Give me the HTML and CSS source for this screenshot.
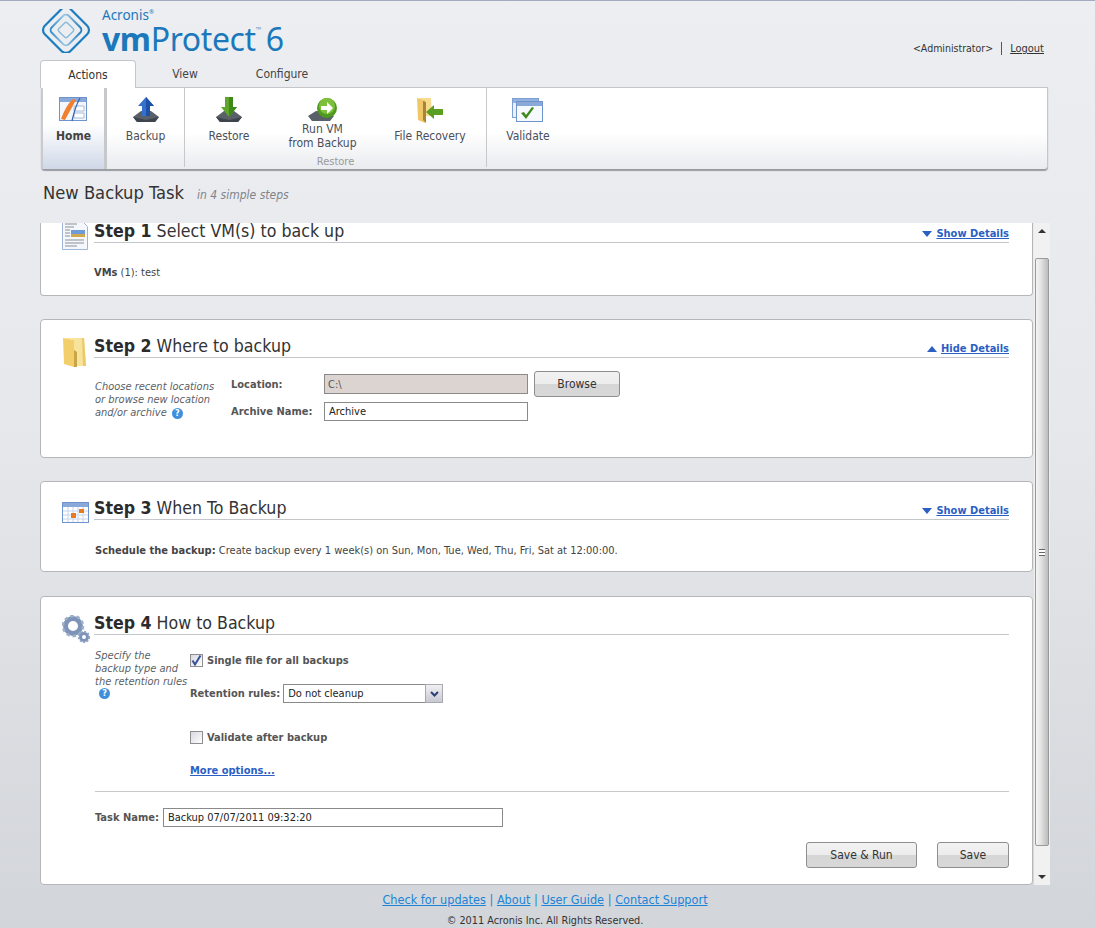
FILE: index.html
```html
<!DOCTYPE html>
<html lang="en">
<head>
<meta charset="utf-8">
<title>Acronis vmProtect 6</title>
<link rel="stylesheet" href="styles.css">
</head>
<body>
<header class="top">
  <div class="brand">
    <svg class="logo-mark" width="50" height="44" viewBox="0 0 50 44">
      <defs><linearGradient id="lg" x1="0" y1="1" x2="1" y2="0"><stop offset="0" stop-color="#2a86c4"/><stop offset=".45" stop-color="#9cc8e6"/><stop offset="1" stop-color="#1a78bc"/></linearGradient></defs>
      <g fill="none" transform="rotate(45 25 21)">
        <rect x="7" y="3" width="36" height="36" rx="6" stroke="#1b7cc0" stroke-width="2.2"/>
        <rect x="13" y="9" width="24" height="24" rx="4" stroke="url(#lg)" stroke-width="2"/>
        <rect x="19" y="15" width="12" height="12" rx="2" stroke="#8bb9d8" stroke-width="1.4"/>
      </g>
    </svg>
    <div class="wordmark">
      <div class="acronis">Acronis<sup>®</sup></div>
      <div class="product"><b>vm</b>Protect<sup>™</sup><span class="six">6</span></div>
    </div>
  </div>
  <div class="user"><span>&lt;Administrator&gt;</span><a href="#">Logout</a></div>
</header>

<nav class="tabs">
  <a class="tab active" href="#">Actions</a>
  <a class="tab view" href="#">View</a>
  <a class="tab config" href="#">Configure</a>
</nav>

<section class="ribbon">
  <div class="rb home">
    <svg width="30" height="26" viewBox="0 0 30 26"><rect x=".5" y=".5" width="27" height="23" fill="#f3f6fb" stroke="#6f93cc"/><rect x="1" y="1" width="26" height="4" fill="#8aa8d8"/><path d="M15 9h10v5H15zM15 16h10v5H15z" fill="#fff" stroke="#a8bcdc"/><path d="M2 22C5 14 9 6 14 2l3 1C14 9 9 17 6 23z" fill="#f08030"/><path d="M13 24C15 15 17 8 21 1" fill="none" stroke="#3a66b8" stroke-width="1.3"/></svg>
    <span>Home</span>
  </div>
  <div class="rb backup">
    <svg width="28" height="28" viewBox="0 0 28 28"><path d="M1 21l8-6h10l8 6-4 5H5z" fill="#596068"/><path d="M1 21l4 5h18l4-5-13 3z" fill="#3e444b"/><path d="M14 1l8 9h-4v10h-8V10H6z" fill="#3570cc"/><path d="M14 1l8 9h-4v10h-4z" fill="#1f50a8"/></svg>
    <span>Backup</span>
  </div>
  <div class="rgroup">
    <div class="ritems">
      <div class="rb restore">
        <svg width="28" height="28" viewBox="0 0 28 28"><path d="M1 21l8-6h10l8 6-4 5H5z" fill="#596068"/><path d="M1 21l4 5h18l4-5-13 3z" fill="#3e444b"/><path d="M10 1h8v10h4l-8 10-8-10h4z" fill="#5fa72a"/><path d="M14 1h4v10h4l-8 10z" fill="#3d8a18"/></svg>
        <span>Restore</span>
      </div>
      <div class="rb runvm">
        <svg width="30" height="24" viewBox="0 0 30 24"><path d="M0 18l8-5h10l8 5-4 5H4z" fill="#596068"/><circle cx="19" cy="10" r="10" fill="#4f9a1e"/><circle cx="19" cy="8" r="8" fill="#7cc03c"/><path d="M13 8h6V4l6 6-6 6v-4h-6z" fill="#fff"/></svg>
        <span>Run VM<br>from Backup</span>
      </div>
      <div class="rb recovery">
        <svg width="28" height="26" viewBox="0 0 28 26"><path d="M1 1l8 2v23l-7-3z" fill="#f0c868"/><path d="M1 1h14l1 18H9V3z" fill="#f7dc90"/><path d="M7 4l3 1v21l-3-3z" fill="#a9843a"/><path d="M10 15l8-7v4h9v6h-9v4z" fill="#5a9e22"/></svg>
        <span>File Recovery</span>
      </div>
    </div>
    <div class="glabel">Restore</div>
  </div>
  <div class="rb validate">
    <svg width="32" height="24" viewBox="0 0 32 24"><rect x=".5" y=".5" width="26" height="19" fill="#eaf1fb" stroke="#7b9ed4"/><rect x="1" y="1" width="25" height="4" fill="#93b2e0"/><rect x="4.500" y="3.500" width="26" height="20" fill="#f6f9fe" stroke="#6f93cc"/><rect x="5" y="4" width="25" height="4" fill="#8aa8d8"/><path d="M9 15l3-1 2 3 6-8 2 1-8 11z" fill="#3f8a1c"/></svg>
    <span>Validate</span>
  </div>
</section>

<div class="page-title"><h1>New Backup Task</h1><em>in 4 simple steps</em></div>

<main class="panel">
  <div class="scroller">
    <section class="card step1">
      <svg class="icon" width="26" height="27" viewBox="0 3 26 27"><path d="M.5.5h19l6 6v23H.5z" fill="#f4f7fc" stroke="#9fb6d8"/><path d="M3 4h12M3 7h9M3 10h5M3 13h5M3 16h5M3 20h19M3 23h19M3 26h12" stroke="#8c9098"/><rect x="9" y="10" width="14" height="7" fill="#6f9cd8"/><rect x="9" y="14" width="14" height="3" fill="#cfa850"/></svg>
      <div class="body">
        <div class="head"><h2><b>Step 1</b> Select VM(s) to back up</h2><a class="toggle" href="#"><i class="tri down"></i>Show Details</a></div>
        <p class="line"><b>VMs</b> (1): test</p>
      </div>
    </section>

    <section class="card step2">
      <svg class="icon" width="26" height="32" viewBox="0 0 26 32"><path d="M1 2l11 2v27L2 28z" fill="#f3cf6c"/><path d="M1 2h21l2 28H12V4z" fill="#f8e39c"/><path d="M12 14l3 2v15h-3z" fill="#c8a548"/><path d="M20 2h2l2 28h-3z" fill="#ecc868"/></svg>
      <div class="body">
        <div class="head"><h2><b>Step 2</b> Where to backup</h2><a class="toggle" href="#"><i class="tri up"></i>Hide Details</a></div>
        <div class="where">
          <p class="note">Choose recent locations<br>or browse new location<br>and/or archive <i class="help">?</i></p>
          <div class="fields">
            <div class="frow r1"><label>Location:</label><input class="box disabled" value="C:\" readonly><button class="btn browse">Browse</button></div>
            <div class="frow r2"><label>Archive Name:</label><input class="box" value="Archive"></div>
          </div>
        </div>
      </div>
    </section>

    <section class="card step3">
      <svg class="icon cal" width="27" height="21" viewBox="0 0 27 21"><rect x=".5" y=".5" width="26" height="20" fill="#fff" stroke="#6f93cc"/><rect x="1" y="1" width="25" height="4" fill="#8aa8d8"/><path d="M1 9h25M1 13h25M1 17h25M6 5v15M11 5v15M16 5v15M21 5v15" stroke="#c6d4ea"/><rect x="9" y="11" width="5" height="5" fill="#e87a20"/><rect x="17" y="7" width="5" height="4" fill="#e87a20"/></svg>
      <div class="body">
        <div class="head"><h2><b>Step 3</b> When To Backup</h2><a class="toggle" href="#"><i class="tri down"></i>Show Details</a></div>
        <p class="line sched"><b>Schedule the backup:</b> Create backup every 1 week(s) on Sun, Mon, Tue, Wed, Thu, Fri, Sat at 12:00:00.</p>
      </div>
    </section>

    <section class="card step4">
      <svg class="icon gear" width="28" height="28" viewBox="0 0 28 28"><circle cx="11" cy="11" r="7.500" fill="none" stroke="#7d94b8" stroke-width="5"/><circle cx="11" cy="11" r="10" fill="none" stroke="#9cb0cc" stroke-width="2.500" stroke-dasharray="3.500 2.800"/><circle cx="22" cy="22" r="3.500" fill="none" stroke="#7d94b8" stroke-width="3"/><circle cx="22" cy="22" r="5.300" fill="none" stroke="#90a4c2" stroke-width="1.800" stroke-dasharray="2 1.500"/></svg>
      <div class="body">
        <div class="head"><h2><b>Step 4</b> How to Backup</h2></div>
        <div class="how">
          <p class="note">Specify the<br>backup type and<br>the retention rules<br><i class="help indent">?</i></p>
          <div class="opts">
            <div class="check first"><i class="cb on"><svg width="11" height="11" viewBox="0 0 11 11"><path d="M1.500 5.500l2.500 4 5.500-9" fill="none" stroke="#37519a" stroke-width="2"/></svg></i><span>Single file for all backups</span></div>
            <div class="retention"><label>Retention rules:</label><div class="combo"><span>Do not cleanup</span><i class="drop"><svg width="9" height="6" viewBox="0 0 9 6"><path d="M1 1l3.500 3.500L8 1" fill="none" stroke="#2c3f78" stroke-width="2"/></svg></i></div></div>
            <div class="check second"><i class="cb"></i><span>Validate after backup</span></div>
            <a class="more" href="#">More options...</a>
          </div>
        </div>
        <div class="task"><label>Task Name:</label><input class="box long" value="Backup 07/07/2011 09:32:20"></div>
        <div class="actions"><button class="btn run">Save &amp; Run</button><button class="btn save">Save</button></div>
      </div>
    </section>
  </div>
  <div class="scrollbar" aria-hidden="true">
    <i class="arrow a-up"></i>
    <div class="thumb"><i class="grip"></i></div>
    <i class="arrow a-down"></i>
  </div>
</main>

<footer class="foot">
  <div class="links"><a href="#">Check for updates</a> | <a href="#">About</a> | <a href="#">User Guide</a> | <a href="#">Contact Support</a></div>
  <div class="copy">© 2011 Acronis Inc. All Rights Reserved.</div>
</footer>
</body>
</html>
```

FILE: styles.css
```css
* { box-sizing: border-box; }
html, body { height: 100%; }
body {
  margin: 0;
  height: 928px;
  overflow: hidden;
  background: linear-gradient(#eceef2, #e6e8ec 45%, #d2d5d9);
  border-top: 1px solid #a3abc0;
  font-family: "DejaVu Sans Condensed", "DejaVu Sans", sans-serif;
  font-stretch: condensed;
  font-size: 12px;
  color: #3a3a3a;
}
/* header */
.top { height: 59px; padding: 7px 51px 0 41px; display: flex; justify-content: space-between; }
.brand { display: flex; gap: 11px; height: 46px; }
.logo-mark { margin-top: 1px; }
.wordmark { color: #1b79bb; font-family: "Noto Sans", sans-serif; font-stretch: normal; }
.acronis { font-size: 13.500px; line-height: 15px; margin-top: 0; }
.acronis sup { font-size: 6px; line-height: 0; vertical-align: 6px; }
.product { font-size: 32px; line-height: 31px; letter-spacing: -.4px; white-space: nowrap; }
.product sup { font-size: 7px; line-height: 0; vertical-align: 19px; color: #6a9dc6; }
.six { margin-left: 5px; }
.user { margin-top: 34px; font-size: 10.500px; line-height: 13px; color: #333; display: flex; height: 13px; }
.user a { color: #333; margin-left: 8px; padding-left: 8px; border-left: 1px solid #555; font-size: 11px; }

/* tabs */
.tabs { height: 27px; padding-left: 40px; display: flex; position: relative; z-index: 1; }
.tab { color: #444; text-decoration: none; font-size: 12px; line-height: 29px; text-align: center; }
.tab.active { width: 96px; height: 28px; line-height: 27px; padding-top: 1px; background: #fff; border: 1px solid #c4c6ca; border-bottom: 0; border-radius: 4px 4px 0 0; color: #333; }
.tab.view { width: 98px; }
.tab.config { width: 96px; }

/* ribbon */
.ribbon {
  margin-left: 41px; width: 1007px; height: 82px;
  display: flex;
  background: linear-gradient(#fff, #fff 55%, #e9ebef);
  border-top: 1px solid #c4c6ca;
  border-right: 1px solid #c4c6ca;
  border-radius: 0 0 4px 4px;
  box-shadow: 0 2px 1px #9a9ca0;
}
.rb { display: flex; flex-direction: column; align-items: center; text-align: center; color: #4a4f5a; line-height: 14px; }
.rb svg { height: 28px; margin-top: 8px; margin-bottom: 5px; flex: none; }
.rb.home { width: 66px; color: #444; font-weight: bold; background: linear-gradient(#fff, #fff 45%, #cfd8e8); border-left: 2px solid #c8cace; border-right: 3px solid #c6c8cc; }
.rb.backup { width: 77px; }
.rgroup { width: 303px; border-left: 1px solid #c6c8cc; border-right: 1px solid #c6c8cc; margin-bottom: 2px; display: flex; flex-direction: column; }
.ritems { display: flex; height: 67px; flex: none; }
.rb.restore { width: 88px; }
.rb.runvm { width: 99px; }
.rb.recovery { width: 114px; padding-left: 2px; }
.rb.runvm span { margin-top: -6px; }
.rb.runvm svg { margin-bottom: 4px; }
.glabel { text-align: center; font-size: 11px; color: #9a9a9a; line-height: 14px; flex: none; }
.rb.validate { width: 82px; }

/* title */
.page-title { height: 54px; padding: 14px 0 0 43px; display: flex; align-items: baseline; gap: 13px; }
h1 { margin: 0; font-size: 18.200px; font-weight: normal; color: #333; line-height: 20px; }
.page-title em { font-size: 12px; color: #808488; }

/* panel */
.panel { margin-left: 40px; width: 1010px; height: 662px; display: flex; }
.scroller { width: 993px; flex: none; }
.card {
  background: #fff; border: 1px solid #b4b6ba; border-radius: 4px;
  padding: 15px 23px 0 21px;
  display: flex;
  margin-bottom: 24px;
}
.icon { flex: none; display: block; }
.body { width: 915px; flex: none; margin-left: auto; }
.head { height: 23px; border-bottom: 1px solid #c4c6ca; display: flex; justify-content: space-between; align-items: flex-end; }
h2 { margin: 0; font-size: 17.600px; font-weight: normal; line-height: 22px; color: #333; }
h2 b { color: #2b2b2b; }
.toggle { color: #2b5fc4; font-weight: bold; font-size: 11px; line-height: 13px; padding-bottom: 3px; margin-bottom: -1px; display: flex; align-items: center; gap: 4px; }
.tri { width: 0; height: 0; border-left: 5px solid transparent; border-right: 5px solid transparent; display: block; }
.tri.down { border-top: 6px solid #2b5fc4; }
.tri.up { border-bottom: 6px solid #2b5fc4; }
.line { margin: 0; font-size: 11px; line-height: 13px; color: #444; }
.line b { color: #444; }

.step1 { height: 73px; margin-bottom: 23px; padding-top: 0; border-top: 0; border-radius: 0 0 4px 4px; }
.step1 .head { margin-top: -3px; }
.step1 .line { margin-top: 23px; }
.step2 { height: 139px; margin-bottom: 23px; }
.step2 .icon { margin-top: 1px; }
.step3 { height: 91px; }
.step3 .icon { margin-top: 5px; }
.step3 .line { margin-top: 24px; padding-left: 1px; }
.step4 { height: 289px; margin-bottom: 0; }
.step4 .icon { margin-top: 3px; }

.note { margin: 0; font-style: italic; font-size: 11px; line-height: 13px; color: #5c5f66; padding-left: 1px; }
.help { display: inline-block; width: 11px; height: 11px; border-radius: 50%; background: #3f8fdc; color: #fff; font-weight: bold; font-style: normal; font-size: 9px; line-height: 11px; text-align: center; margin-left: 2px; }
.help.indent { margin-left: 4px; vertical-align: 2px; }

.where { display: flex; }
.where .note { width: 137px; margin-top: 22px; }
.fields { padding-top: 13px; }
.frow { display: flex; align-items: center; }
.frow label, .retention label, .task label, .check span { font-weight: bold; font-size: 11px; color: #555; }
.frow label { width: 93px; }
.r1 { height: 26px; }
.r2 { margin-top: 5px; }
.box { border: 1px solid #8a8a8a; background: #fff; font: inherit; font-size: 11px; color: #222; padding: 0 4px; width: 204px; height: 19px; border-radius: 0; outline: 0; }
.box.disabled { background: #dcd4d0; height: 20px; color: #555; padding: 0 3px; }
.btn { font: inherit; font-size: 12px; color: #333; height: 26px; border: 1px solid #8e8e8e; border-radius: 3px; background: linear-gradient(#f2f2f2, #ececec 50%, #d6d6d6 52%, #d8d8d8); padding: 0; }
.browse { width: 86px; margin-left: 6px; }

.how { display: flex; }
.how .note { width: 96px; margin-top: 14px; }
.opts { display: flex; flex-direction: column; align-items: flex-start; }
.check { display: flex; align-items: center; gap: 4px; }
.cb { width: 13px; height: 13px; border: 1px solid #8e8e8e; background: linear-gradient(135deg, #d8d8e0, #fff); display: block; }
.cb svg { display: block; margin: 0; }
.check.first { margin-top: 19px; }
.retention { display: flex; align-items: center; margin-top: 17px; gap: 3px; }
.combo { width: 160px; height: 19px; border: 1px solid #8a8a8a; display: flex; font-size: 11px; line-height: 18px; color: #222; padding-left: 4px; justify-content: space-between; background: #fff; }
.drop { width: 18px; height: 19px; margin: -1px -1px 0 0; border: 1px solid #a8a8b0; background: linear-gradient(#f0f0f4, #c8c8d0); display: flex; align-items: center; justify-content: center; }
.check.second { margin-top: 28px; }
.more { margin-top: 20px; font-weight: bold; font-size: 11px; color: #2b5fc4; line-height: 13px; }
.task { margin: 14px 0 0 1px; padding-top: 16px; border-top: 1px solid #c8c8c8; display: flex; align-items: center; gap: 4px; }
.box.long { width: 340px; }
.actions { display: flex; justify-content: flex-end; gap: 20px; margin-top: 15px; }
.run { width: 111px; }
.save { width: 72px; }

/* scrollbar */
.scrollbar { width: 16px; margin-left: 1px; background: #f1f1f1; display: flex; flex-direction: column; justify-content: space-between; align-items: center; position: relative; }
.arrow { width: 0; height: 0; border-left: 4px solid transparent; border-right: 4px solid transparent; margin: 6px 0; display: block; }
.a-up { border-bottom: 4px solid #333; }
.a-down { border-top: 4px solid #333; }
.thumb { position: absolute; left: 1px; top: 35px; width: 14px; height: 588px; border: 1px solid #999; border-radius: 2px; background: linear-gradient(90deg, #f4f4f4, #e4e4e4 40%, #bcbcbc); display: flex; align-items: center; justify-content: center; }
.grip { width: 6px; height: 7px; border-top: 1px solid #666; border-bottom: 1px solid #666; background: linear-gradient(#fff 40%, #666 40%, #666 60%, #fff 60%); display: block; }

/* footer */
.foot { width: 1010px; margin-left: 40px; text-align: center; padding-top: 7px; }
.links { font-size: 12.600px; line-height: 16px; color: #1b84d8; }
.links a { color: #1b84d8; }
.copy { font-size: 10.800px; line-height: 13px; margin-top: 6px; color: #333; }
```
